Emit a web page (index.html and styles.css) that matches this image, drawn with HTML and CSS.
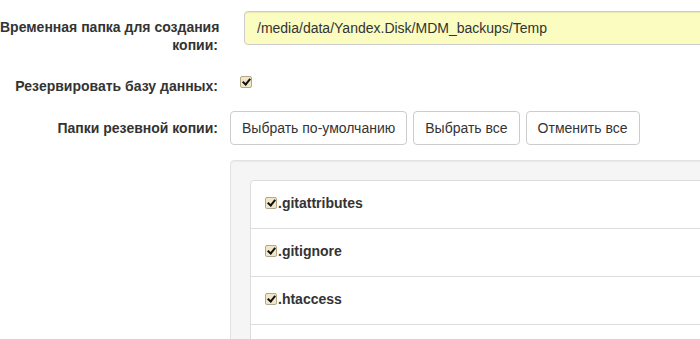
FILE: index.html
```html
<!DOCTYPE html>
<html lang="ru">
<head>
    <meta charset="UTF-8">
    <title>Резервная копия</title>
    <link rel="stylesheet" href="styles.css">
</head>
<body>
    <form class="backup-form">
        <div class="form-row row-temp">
            <label class="form-label">Временная папка для создания<br>копии:</label>
            <div class="form-control-wrap">
                <input class="text-input" type="text" value="/media/data/Yandex.Disk/MDM_backups/Temp">
            </div>
        </div>

        <div class="form-row row-db">
            <label class="form-label">Резервировать базу данных:</label>
            <div class="form-control-wrap">
                <span class="check check-db"></span>
            </div>
        </div>

        <div class="form-row row-folders">
            <label class="form-label">Папки резевной копии:</label>
            <div class="form-control-wrap btn-group">
                <button type="button" class="btn">Выбрать по-умолчанию</button>
                <button type="button" class="btn">Выбрать все</button>
                <button type="button" class="btn">Отменить все</button>
            </div>
        </div>

        <div class="well">
            <ul class="list-group">
                <li class="list-item"><span class="check"></span>.gitattributes</li>
                <li class="list-item"><span class="check"></span>.gitignore</li>
                <li class="list-item"><span class="check"></span>.htaccess</li>
                <li class="list-item list-item-empty"></li>
            </ul>
        </div>
    </form>
</body>
</html>
```

FILE: styles.css
```css
* {
    margin: 0;
    padding: 0;
    box-sizing: border-box;
}

html, body {
    overflow: hidden;
}

body {
    font-family: "Liberation Sans", Arial, sans-serif;
    font-size: 14px;
    line-height: 20px;
    color: #333;
    background: #fff;
}

.backup-form {
    width: 1000px;
    padding-top: 11px;
}

.form-row {
    display: flex;
    column-gap: 12px;
}

.form-label {
    width: 218px;
    flex-shrink: 0;
    text-align: right;
    font-weight: bold;
    padding-top: 7px;
    white-space: nowrap;
}

.row-temp .form-label {
    line-height: 18px;
}

.row-db {
    margin-top: 15px;
}

.row-folders {
    margin-top: 15px;
}

.text-input {
    display: block;
    margin-left: 14px;
    width: 700px;
    height: 34px;
    padding: 6px 12px;
    font: inherit;
    color: #333;
    background: #fafcc0;
    border: 1px solid #ccc;
    border-radius: 4px;
    box-shadow: inset 0 1px 1px rgba(0, 0, 0, 0.075);
}

/* checkbox look */
.check {
    display: inline-block;
    position: relative;
    width: 12px;
    height: 12px;
    vertical-align: -1px;
    background: #f3e6c6;
    border: 1px solid #b3a88c;
    border-radius: 2px;
}

.check::after {
    content: '';
    position: absolute;
    left: 3px;
    top: 0;
    width: 3px;
    height: 6px;
    border: solid #111;
    border-width: 0 2px 2px 0;
    transform: rotate(40deg);
}

.check-db {
    margin-top: 7px;
    margin-left: 10px;
    display: block;
}

.btn-group {
    display: flex;
    gap: 6px;
}

.btn {
    height: 34px;
    padding: 6px 11px;
    font: inherit;
    color: #333;
    background: #fff;
    border: 1px solid #ccc;
    border-radius: 4px;
}

.well {
    margin-top: 15px;
    margin-left: 230px;
    width: 700px;
    padding: 19px;
    background: #f5f5f5;
    border: 1px solid #e3e3e3;
    border-radius: 4px;
    box-shadow: inset 0 1px 1px rgba(0, 0, 0, 0.05);
}

.list-group {
    list-style: none;
    background: #fff;
    border: 1px solid #ddd;
    border-radius: 4px;
}

.list-item {
    padding: 12px 14px 15px;
    font-weight: bold;
    border-bottom: 1px solid #ddd;
}

.list-item-empty {
    height: 48px;
}

.list-item .check {
    margin-right: 1px;
}
```
